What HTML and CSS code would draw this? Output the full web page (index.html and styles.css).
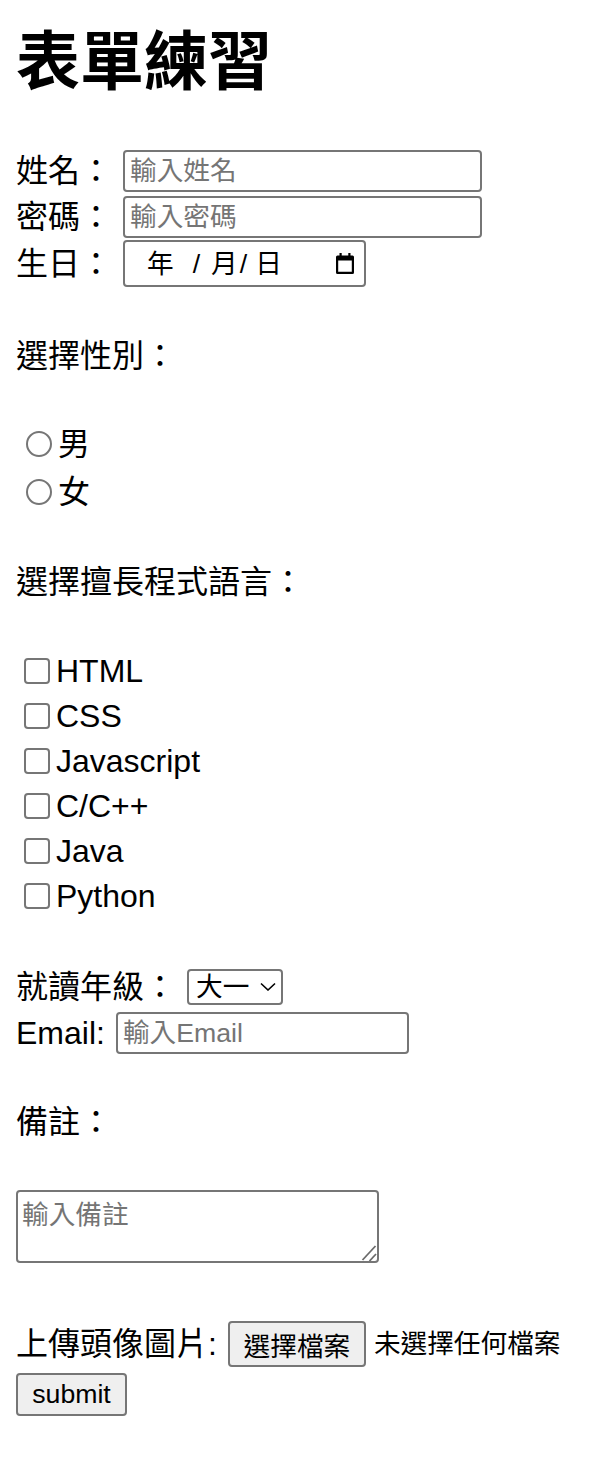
FILE: index.html
```html
<!DOCTYPE html>
<html lang="zh-Hant">
<head>
<meta charset="utf-8">
<title>表單練習</title>
<link rel="stylesheet" href="styles.css">
</head>
<body>
<h1 class="title">表單練習</h1>
<form class="form">
  <div class="row row-name"><label class="label">姓名：</label><input class="field field-wide" type="text" placeholder="輸入姓名"></div>
  <div class="row row-pwd"><label class="label">密碼：</label><input class="field field-wide" type="password" placeholder="輸入密碼"></div>
  <div class="row row-date"><label class="label">生日：</label><div class="date-box"><span class="seg seg-y">年</span><span class="sep sep1">/</span><span class="seg seg-m">月</span><span class="sep sep2">/</span><span class="seg seg-d">日</span><svg class="cal" width="18" height="21" viewBox="0 0 18 21"><rect x="3.5" y="0" width="2.2" height="3.5" fill="#000"/><rect x="12.3" y="0" width="2.2" height="3.5" fill="#000"/><path fill="#000" fill-rule="evenodd" d="M1.5 2.5h15a1.5 1.5 0 0 1 1.5 1.5v15.5a1.5 1.5 0 0 1-1.5 1.5h-15A1.5 1.5 0 0 1 0 19.5V4a1.5 1.5 0 0 1 1.5-1.5zM2.2 7.5v11.3h13.6V7.5z"/></svg></div></div>
  <p class="section section-gender">選擇性別：</p>
  <label class="opt opt-r1"><input type="radio" class="radio" name="gender">男</label>
  <label class="opt opt-r2"><input type="radio" class="radio" name="gender">女</label>
  <p class="section section-lang">選擇擅長程式語言：</p>
  <label class="opt check-row check-first"><input type="checkbox" class="check">HTML</label>
  <label class="opt check-row"><input type="checkbox" class="check">CSS</label>
  <label class="opt check-row"><input type="checkbox" class="check">Javascript</label>
  <label class="opt check-row"><input type="checkbox" class="check">C/C++</label>
  <label class="opt check-row"><input type="checkbox" class="check">Java</label>
  <label class="opt check-row"><input type="checkbox" class="check">Python</label>
  <div class="row row-grade"><label class="label">就讀年級：</label><span class="select-wrap"><select class="select"><option>大一</option><option>大二</option><option>大三</option><option>大四</option></select><svg class="chev" width="18" height="9" viewBox="0 0 18 9"><polyline points="2,1.5 9,8 16,1.5" fill="none" stroke="#000" stroke-width="1.6"/></svg></span></div>
  <div class="row row-email"><label class="label">Email:</label><input class="field field-email" type="email" placeholder="輸入Email"></div>
  <p class="section section-note">備註：</p>
  <div class="note-wrap"><textarea class="note" placeholder="輸入備註"></textarea><svg class="grip" width="16" height="16" viewBox="0 0 16 16"><line x1="14.5" y1="1" x2="1.5" y2="15" stroke="#6b6b6b" stroke-width="1.8"/><line x1="15" y1="9" x2="8.5" y2="16" stroke="#6b6b6b" stroke-width="1.8"/></svg></div>
  <div class="row row-file"><label class="label">上傳頭像圖片:</label><span class="file"><button type="button" class="file-btn">選擇檔案</button><span class="file-name">未選擇任何檔案</span></span></div>
  <button type="submit" class="submit">submit</button>
</form>
</body>
</html>
```
FILE: styles.css
```css
html, body {
  background: #fff;
}
body {
  margin: 0;
  padding: 0 16px;
  font-family: "Liberation Sans", "Noto Sans CJK TC", sans-serif;
  font-size: 32px;
  line-height: 44px;
  color: #000;
}
.title {
  margin: 30px 0 0;
  height: 64px;
  font-size: 64px;
  line-height: 64px;
  font-weight: 700;
}
.form {
  margin: 0;
  display: flex;
  flex-direction: column;
  align-items: flex-start;
}
.row {
  display: flex;
  align-items: center;
  gap: 11px;
}
.label {
  line-height: 44px;
  white-space: nowrap;
}
.row-name { margin-top: 56px; height: 42px; }
.row-pwd { margin-top: 4px; height: 42px; }
.row-date { margin-top: 2px; height: 47px; }
.row-grade { margin-top: 51px; height: 36px; }
.row-email { margin-top: 7px; height: 42px; }
.row-file { margin-top: 58px; height: 46px; }

.field {
  box-sizing: border-box;
  height: 42px;
  margin: 0;
  padding: 0 5px;
  border: 2px solid #767676;
  border-radius: 4px;
  background: #fff;
  font-family: "Liberation Sans", "Noto Sans CJK TC", sans-serif;
  font-size: 26.67px;
  color: #000;
  outline: none;
}
.field::placeholder,
.note::placeholder {
  color: #757575;
}
.field-wide { width: 359px; }
.field-email { width: 293px; }

.date-box {
  box-sizing: border-box;
  width: 243px;
  height: 47px;
  display: flex;
  align-items: center;
  padding: 0 10px 0 22px;
  border: 2px solid #767676;
  border-radius: 4px;
  font-size: 26.67px;
  line-height: 32px;
}
.sep1 { margin-left: 19px; }
.seg-m { margin-left: 11px; }
.sep2 { margin-left: 2px; }
.seg-d { margin-left: 8px; }
.cal { margin-left: auto; display: block; }

.section {
  margin: 0;
  height: 44px;
  line-height: 44px;
}
.section-gender { margin-top: 47px; }
.section-lang { margin-top: 46px; }
.section-note { margin-top: 46px; }

.opt {
  display: flex;
  align-items: center;
  height: 44px;
  line-height: 44px;
}
.opt-r1 { margin-top: 44px; }
.opt-r2 { margin-top: 4px; }
.check-row { height: 45px; }
.check-first { margin-top: 44px; }

.radio {
  appearance: none;
  -webkit-appearance: none;
  box-sizing: border-box;
  width: 26px;
  height: 26px;
  margin: 0 6px 0 10px;
  border: 2px solid #767676;
  border-radius: 50%;
  background: #fff;
}
.check {
  appearance: none;
  -webkit-appearance: none;
  box-sizing: border-box;
  width: 26px;
  height: 26px;
  margin: 0 6px 0 8px;
  border: 2px solid #767676;
  border-radius: 4px;
  background: #fff;
}

.select-wrap {
  position: relative;
  display: inline-flex;
}
.select {
  appearance: none;
  -webkit-appearance: none;
  box-sizing: border-box;
  width: 96px;
  height: 36px;
  margin: 0;
  padding: 0 0 0 7px;
  border: 2px solid #767676;
  border-radius: 4px;
  background: #fff;
  font-family: "Liberation Sans", "Noto Sans CJK TC", sans-serif;
  font-size: 26.67px;
  color: #000;
  outline: none;
}
.chev {
  position: absolute;
  left: 72px;
  top: 13px;
  pointer-events: none;
}

.note-wrap {
  position: relative;
  margin-top: 46px;
  height: 73px;
}
.note {
  box-sizing: border-box;
  display: block;
  width: 363px;
  height: 73px;
  margin: 0;
  padding: 5px 4px 2px;
  border: 2px solid #767676;
  border-radius: 4px;
  font-family: "Liberation Sans", "Noto Sans CJK TC", sans-serif;
  font-size: 26.67px;
  line-height: 37px;
  resize: none;
  outline: none;
}
.grip {
  position: absolute;
  right: 2px;
  bottom: 2px;
  pointer-events: none;
}

.file {
  display: flex;
  align-items: center;
  font-size: 26.67px;
}
.file-btn,
.submit {
  box-sizing: border-box;
  margin: 0;
  padding: 0;
  border: 2px solid #767676;
  border-radius: 4px;
  background: #efefef;
  font-family: "Liberation Sans", "Noto Sans CJK TC", sans-serif;
  font-size: 26.67px;
  color: #000;
}
.file-btn {
  width: 138px;
  height: 46px;
  margin-right: 8px;
}
.submit {
  width: 111px;
  height: 43px;
  margin-top: 6px;
}
```
